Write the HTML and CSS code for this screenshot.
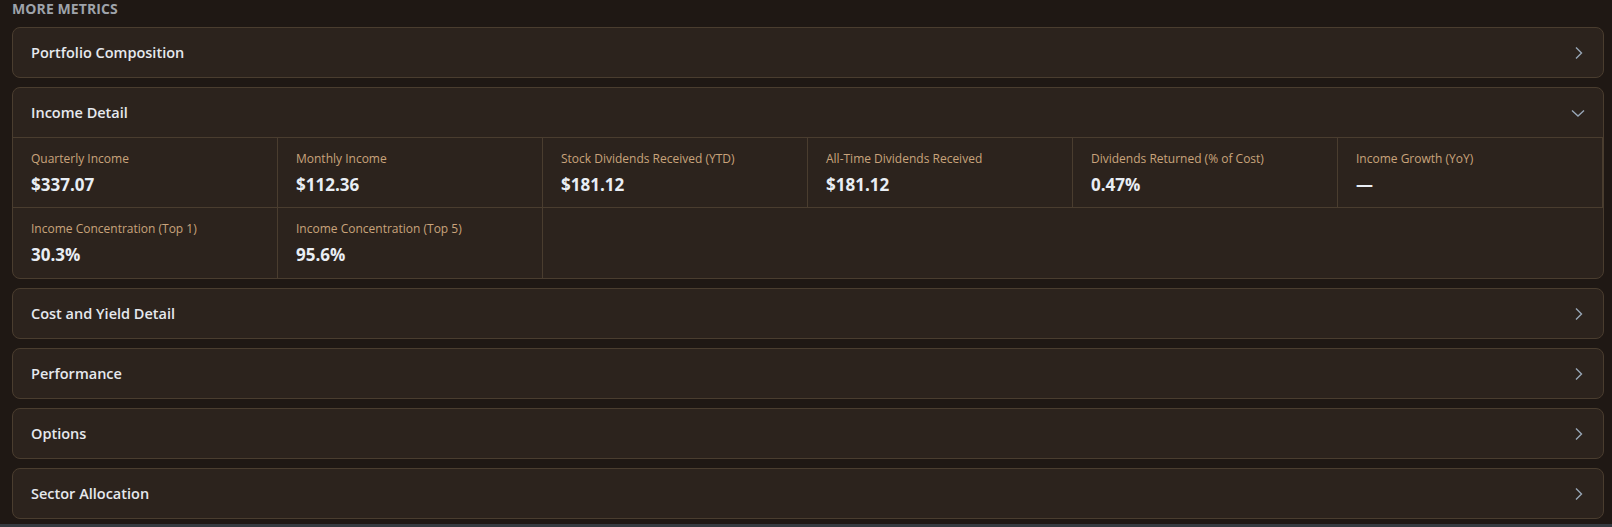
FILE: index.html
```html
<!DOCTYPE html>
<html lang="en">
<head>
<meta charset="utf-8">
<title>More Metrics</title>
<link rel="stylesheet" href="styles.css">
</head>
<body>
<div class="page">
  <h2 class="section-title">MORE METRICS</h2>
  <div class="stack">
    <div class="card">
      <div class="card-head">
        <span class="card-title">Portfolio Composition</span>
        <svg class="chev" viewBox="0 0 16 16"><path d="M6 2.5 L11.5 8 L6 13.5"/></svg>
      </div>
    </div>
    <div class="card">
      <div class="card-head open">
        <span class="card-title">Income Detail</span>
        <svg class="chev" viewBox="0 0 16 16"><path d="M2 5.5 L8 11 L14 5.5"/></svg>
      </div>
      <div class="grid">
        <div class="cell"><div class="label">Quarterly Income</div><div class="value">$337.07</div></div>
        <div class="cell"><div class="label">Monthly Income</div><div class="value">$112.36</div></div>
        <div class="cell"><div class="label">Stock Dividends Received (YTD)</div><div class="value">$181.12</div></div>
        <div class="cell"><div class="label">All-Time Dividends Received</div><div class="value">$181.12</div></div>
        <div class="cell"><div class="label">Dividends Returned (% of Cost)</div><div class="value">0.47%</div></div>
        <div class="cell"><div class="label">Income Growth (YoY)</div><div class="value">—</div></div>
        <div class="cell last"><div class="label">Income Concentration (Top 1)</div><div class="value">30.3%</div></div>
        <div class="cell last"><div class="label">Income Concentration (Top 5)</div><div class="value">95.6%</div></div>
      </div>
    </div>
    <div class="card">
      <div class="card-head">
        <span class="card-title">Cost and Yield Detail</span>
        <svg class="chev" viewBox="0 0 16 16"><path d="M6 2.5 L11.5 8 L6 13.5"/></svg>
      </div>
    </div>
    <div class="card">
      <div class="card-head">
        <span class="card-title">Performance</span>
        <svg class="chev" viewBox="0 0 16 16"><path d="M6 2.5 L11.5 8 L6 13.5"/></svg>
      </div>
    </div>
    <div class="card">
      <div class="card-head">
        <span class="card-title">Options</span>
        <svg class="chev" viewBox="0 0 16 16"><path d="M6 2.5 L11.5 8 L6 13.5"/></svg>
      </div>
    </div>
    <div class="card">
      <div class="card-head">
        <span class="card-title">Sector Allocation</span>
        <svg class="chev" viewBox="0 0 16 16"><path d="M6 2.5 L11.5 8 L6 13.5"/></svg>
      </div>
    </div>
  </div>
</div>
<div class="bottom-bar"></div>
</body>
</html>
```

FILE: styles.css
```css
html, body {
  margin: 0;
  padding: 0;
  background: #1f1814;
  height: 527px;
  overflow: hidden;
}
body {
  font-family: "Open Sans", "Noto Sans", sans-serif;
  color: #e4e7eb;
  position: relative;
}
.page {
  padding: 0 8px 0 12px;
}
.section-title {
  margin: 0;
  height: 27px;
  font-size: 14px;
  line-height: 18px;
  font-weight: 700;
  color: #9ea3aa;
  letter-spacing: 0.1px;
}
.stack {
  display: flex;
  flex-direction: column;
  gap: 9px;
}
.card {
  background: #2c231d;
  border: 1px solid #4a3d2f;
  border-radius: 8px;
  overflow: hidden;
}
.card-head {
  height: 49px;
  display: flex;
  align-items: center;
  justify-content: space-between;
  padding: 0 17px 0 18px;
}
.card-head.open {
  border-bottom: 1px solid #4a3d2f;
}
.card-title {
  font-size: 14.5px;
  font-weight: 600;
  color: #e6e9ee;
}
.chev {
  width: 16px;
  height: 16px;
  fill: none;
  stroke: #98a6b6;
  stroke-width: 1.4;
}
.grid {
  display: grid;
  grid-template-columns: repeat(6, 1fr);
  grid-auto-rows: 70px;
}
.cell {
  border-right: 1px solid #4a3d2f;
  border-bottom: 1px solid #4a3d2f;
  padding: 13px 18px 0 18px;
}
.cell.last {
  border-bottom: none;
  height: 68px;
}
.label {
  font-size: 12px;
  line-height: 16px;
  color: #c9a47c;
}
.value {
  margin-top: 6px;
  font-size: 17px;
  line-height: 24px;
  font-weight: 700;
  color: #e9eef4;
}
.bottom-bar {
  position: absolute;
  left: 0;
  right: 0;
  bottom: 0;
  height: 3px;
  background: #353a40;
}
```
